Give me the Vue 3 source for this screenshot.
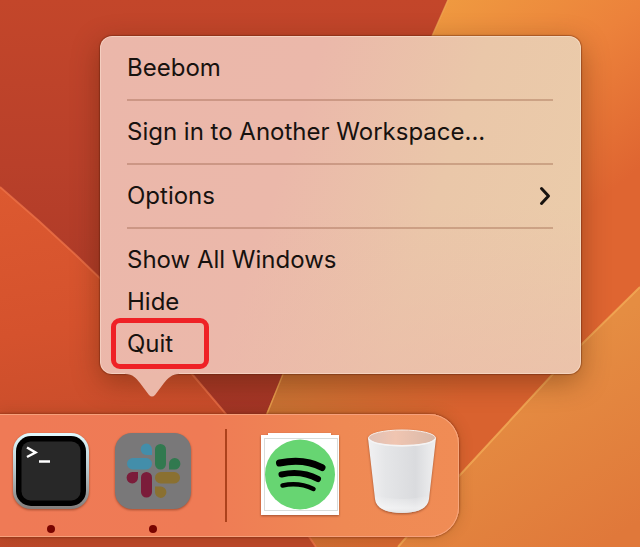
<template>
  <main class="desktop">
    <svg class="wallpaper" viewBox="0 0 640 547" preserveAspectRatio="none" aria-hidden="true">
      <defs>
        <linearGradient id="red" x1="0" y1="0" x2="0" y2="1">
          <stop offset="0" stop-color="#c3462a" />
          <stop offset="0.3" stop-color="#b9402a" />
          <stop offset="1" stop-color="#972f23" />
        </linearGradient>
        <linearGradient id="left" gradientUnits="userSpaceOnUse" x1="0" y1="190" x2="60" y2="547">
          <stop offset="0" stop-color="#dc5930" />
          <stop offset="0.4" stop-color="#d5522d" />
          <stop offset="1" stop-color="#bc4829" />
        </linearGradient>
        <linearGradient id="right" gradientUnits="userSpaceOnUse" x1="440" y1="0" x2="600" y2="200">
          <stop offset="0" stop-color="#ef9a40" />
          <stop offset="0.5" stop-color="#ec823b" />
          <stop offset="1" stop-color="#df6531" />
        </linearGradient>
        <linearGradient id="middle" gradientUnits="userSpaceOnUse" x1="270" y1="390" x2="460" y2="420">
          <stop offset="0" stop-color="#c87233" />
          <stop offset="1" stop-color="#d9622f" />
        </linearGradient>
        <linearGradient id="corner" gradientUnits="userSpaceOnUse" x1="500" y1="390" x2="600" y2="547">
          <stop offset="0" stop-color="#e58d42" />
          <stop offset="1" stop-color="#e0783a" />
        </linearGradient>
      </defs>
      <rect width="640" height="547" fill="url(#red)" />
      <path d="M448 0H640V547H209Z" fill="url(#right)" />
      <path d="M283 374H640V547H209Z" fill="url(#middle)" />
      <path d="M448 0L283 374L267 414L209 547" fill="none" stroke="#f2ac55" stroke-opacity="0.7" stroke-width="1.500" />
      <path d="M0 187Q100 272 192 374L226 414L316 547H0Z" fill="url(#left)" />
      <path d="M0 187Q100 272 192 374L226 414L316 547" fill="none" stroke="#f1764c" stroke-opacity="0.7" stroke-width="2" />
      <path d="M640 287L580 346L553 374L459 476L398 547H640Z" fill="url(#corner)" />
      <path d="M640 287L580 346L553 374L459 476L398 547" fill="none" stroke="#f2ac58" stroke-opacity="0.8" stroke-width="2" />
    </svg>

    <nav class="menu" aria-label="Slack">
      <template v-for="(group, index) in groups" :key="index">
        <hr v-if="index > 0" class="separator" />
        <ul class="group">
          <li v-for="item in group" :key="item.label" class="item" :class="{ marked: item.marked }">
            <button type="button" class="item-button">
              <span>{{ item.label }}</span>
              <svg v-if="item.submenu" class="chevron" viewBox="0 0 14 20" aria-hidden="true">
                <path d="M2.500 2.500L9.500 10L2.500 17.500" />
              </svg>
            </button>
          </li>
        </ul>
      </template>
      <svg class="tail" viewBox="0 0 54 25" aria-hidden="true">
        <path d="M0 0V1C8 1 11 5 15 10L24 22Q27 25 30 22L39 10C43 5 47 1 54 1V0Z" />
      </svg>
    </nav>

    <div class="dock">
      <button type="button" class="app" aria-label="Terminal">
        <svg class="app-icon" width="76" height="90" viewBox="0 0 76 90">
          <defs>
            <linearGradient id="frame" x1="0" y1="0" x2="0" y2="1">
              <stop offset="0" stop-color="#e2fbff" />
              <stop offset="0.45" stop-color="#b9cbd0" />
              <stop offset="1" stop-color="#827d7b" />
            </linearGradient>
          </defs>
          <rect y="4" width="76" height="76" rx="18" fill="url(#frame)" />
          <rect x="3" y="7" width="70" height="70" rx="15" fill="#000" />
          <rect x="8.500" y="12.500" width="59" height="59" rx="9" fill="#282828" />
          <path d="M14 18.500L22.500 23.500L14 28" fill="none" stroke="#fff" stroke-width="2.500" />
          <path d="M26 32.500H37" stroke="#fff" stroke-width="2.500" />
        </svg>
        <span class="running"></span>
      </button>

      <button type="button" class="app" aria-label="Slack">
        <svg class="app-icon" width="76" height="90" viewBox="0 0 76 90">
          <rect y="4" width="76" height="76" rx="17" fill="#797879" />
          <g fill="#438eaa">
            <rect x="12" y="29" width="25" height="11.500" rx="5.700" />
            <path d="M37 26V20.500A5.700 5.700 0 1 0 31.300 26Z" />
          </g>
          <g fill="#31794f">
            <rect x="40" y="15" width="11" height="25.500" rx="5.500" />
            <path d="M54 40.500H59.500A5.700 5.700 0 1 0 54 34.800Z" />
          </g>
          <g fill="#8a7031">
            <rect x="40" y="43" width="25" height="11.500" rx="5.700" />
            <path d="M40 57.500V63A5.700 5.700 0 1 0 45.700 57.500Z" />
          </g>
          <g fill="#7b1c3a">
            <rect x="26" y="43" width="11" height="25.500" rx="5.500" />
            <path d="M23 43H17.500A5.700 5.700 0 1 0 23 48.700Z" />
          </g>
        </svg>
        <span class="running"></span>
      </button>

      <div class="divider"></div>

      <button type="button" class="app" aria-label="Spotify">
        <svg class="app-icon" width="78" height="90" viewBox="0 0 78 90">
          <path d="M0 6H7V4H70V6H78V86H0Z" fill="#fff" />
          <rect x="3.500" y="9.500" width="73" height="72" fill="none" stroke="#d9dcda" />
          <circle cx="39" cy="45.500" r="35" fill="#67d572" />
          <g fill="none" stroke="#000" stroke-linecap="round">
            <path d="M18.500 34Q43 29 61 38.500" stroke-width="7" />
            <path d="M20.500 45.500Q40 41 57 50" stroke-width="6" />
            <path d="M21.500 56.500Q38 53 52.500 60" stroke-width="4.500" />
          </g>
        </svg>
      </button>

      <button type="button" class="app" aria-label="Trash">
        <svg class="app-icon" width="74" height="90" viewBox="0 0 74 90">
          <defs>
            <linearGradient id="cup">
              <stop offset="0" stop-color="#f1f1f2" />
              <stop offset="0.25" stop-color="#e5e6e8" />
              <stop offset="0.7" stop-color="#dadbde" />
              <stop offset="1" stop-color="#f0f0f1" />
            </linearGradient>
            <linearGradient id="inside">
              <stop offset="0" stop-color="#dfc0b5" />
              <stop offset="0.4" stop-color="#f0c5b1" />
              <stop offset="1" stop-color="#d9b9a9" />
            </linearGradient>
            <linearGradient id="base" x1="0" y1="0" x2="0" y2="1">
              <stop offset="0" stop-color="#fff" stop-opacity="0" />
              <stop offset="0.7" stop-color="#fff" stop-opacity="0.5" />
              <stop offset="1" stop-color="#e0e0e2" />
            </linearGradient>
          </defs>
          <path d="M3 9L10 70C11 79 21 84 37 84S63 79 64 70L71 9Z" fill="url(#cup)" />
          <path d="M9.500 66Q37 74 64.500 66L64 70C63 79 53 84 37 84S11 79 10 70Z" fill="url(#base)" />
          <ellipse cx="37" cy="9" rx="33.500" ry="8" fill="url(#inside)" stroke="#f7eeea" />
          <path d="M4 10C8 19 66 19 70 10" fill="none" stroke="#f4f4f5" stroke-width="1.500" />
        </svg>
      </button>
    </div>
  </main>
</template>

<script setup>
// menu entries, one array per section between the separators
const groups = [
  [{ label: 'Beebom' }],
  [{ label: 'Sign in to Another Workspace...' }],
  [{ label: 'Options', submenu: true }],
  [{ label: 'Show All Windows' }, { label: 'Hide' }, { label: 'Quit', marked: true }]
]
</script>

<style>
body {
  margin: 0;
}
</style>

<style scoped>
.desktop {
  position: relative;
  display: flex;
  flex-direction: column;
  box-sizing: border-box;
  min-height: 100vh;
  padding: 36px 0 10px;
  overflow: hidden;
  font-family: Inter, "Liberation Sans", sans-serif;
}

.wallpaper {
  position: absolute;
  inset: 0;
  width: 100%;
  height: 100%;
}

.menu {
  position: relative;
  z-index: 1;
  margin: 0 59px 40px 100px;
  padding: 11px 28px 9px 27px;
  border-radius: 12px;
  background:
    linear-gradient(to bottom, rgba(236, 184, 170, 0) 50%, rgba(236, 184, 170, 0.5) 100%),
    linear-gradient(108deg, #ebb7aa 0%, #ebb8aa 38%, #eac7a9 66%, #ebcdaa 100%);
  box-shadow:
    inset 0 0 0 1px rgba(255, 235, 220, 0.45),
    0 0 1px 1px rgba(90, 30, 10, 0.4),
    0 8px 28px rgba(70, 30, 5, 0.4);
}

.group {
  margin: 0;
  padding: 0;
  list-style: none;
}

.item {
  position: relative;
}

.item-button {
  display: flex;
  align-items: center;
  justify-content: space-between;
  width: 100%;
  height: 42px;
  padding: 0;
  border: none;
  background: none;
  color: #17120f;
  font-family: inherit;
  font-size: 24px;
  line-height: 42px;
  text-align: left;
}

.item.marked::after {
  content: "";
  position: absolute;
  top: -5px;
  left: -16px;
  box-sizing: border-box;
  width: 98px;
  height: 51px;
  border: 5px solid #ef2126;
  border-radius: 9px;
  pointer-events: none;
}

.separator {
  height: 2px;
  margin: 10px 0;
  border: none;
  background: rgba(140, 80, 55, 0.32);
}

.chevron {
  width: 14px;
  height: 20px;
  fill: none;
  stroke: #17120f;
  stroke-width: 3;
  stroke-linecap: round;
  stroke-linejoin: round;
}

.tail {
  position: absolute;
  top: 100%;
  left: 25px;
  width: 54px;
  height: 25px;
  margin-top: -1px;
  fill: #ebb8a9;
}

.dock {
  position: relative;
  display: flex;
  align-items: flex-start;
  align-self: flex-start;
  gap: 26px;
  box-sizing: border-box;
  margin-top: auto;
  padding: 15px 20px 4px 13px;
  border-radius: 0 30px 30px 0;
  background: linear-gradient(to right, #ef7a56 0%, #ef7b55 45%, #ef8954 75%, #f08c55 100%);
  box-shadow:
    inset -1px 0 0 #f7a67c,
    inset 0 1px 0 #f7a07b,
    inset 0 -1px 0 #f7a07b,
    0 0 2px 1px rgba(110, 35, 10, 0.4),
    0 0 14px rgba(90, 50, 10, 0.25);
}

.app {
  display: flex;
  flex-direction: column;
  align-items: center;
  height: 104px;
  padding: 0;
  border: none;
  background: none;
}

.app-icon {
  display: block;
  filter: drop-shadow(0 1px 1px rgba(90, 30, 10, 0.5));
}

.running {
  width: 8px;
  height: 8px;
  margin-top: 6px;
  border-radius: 50%;
  background: #790400;
}

.divider {
  width: 2px;
  height: 93px;
  margin: 0 8px;
  background: #ad421c;
}
</style>
